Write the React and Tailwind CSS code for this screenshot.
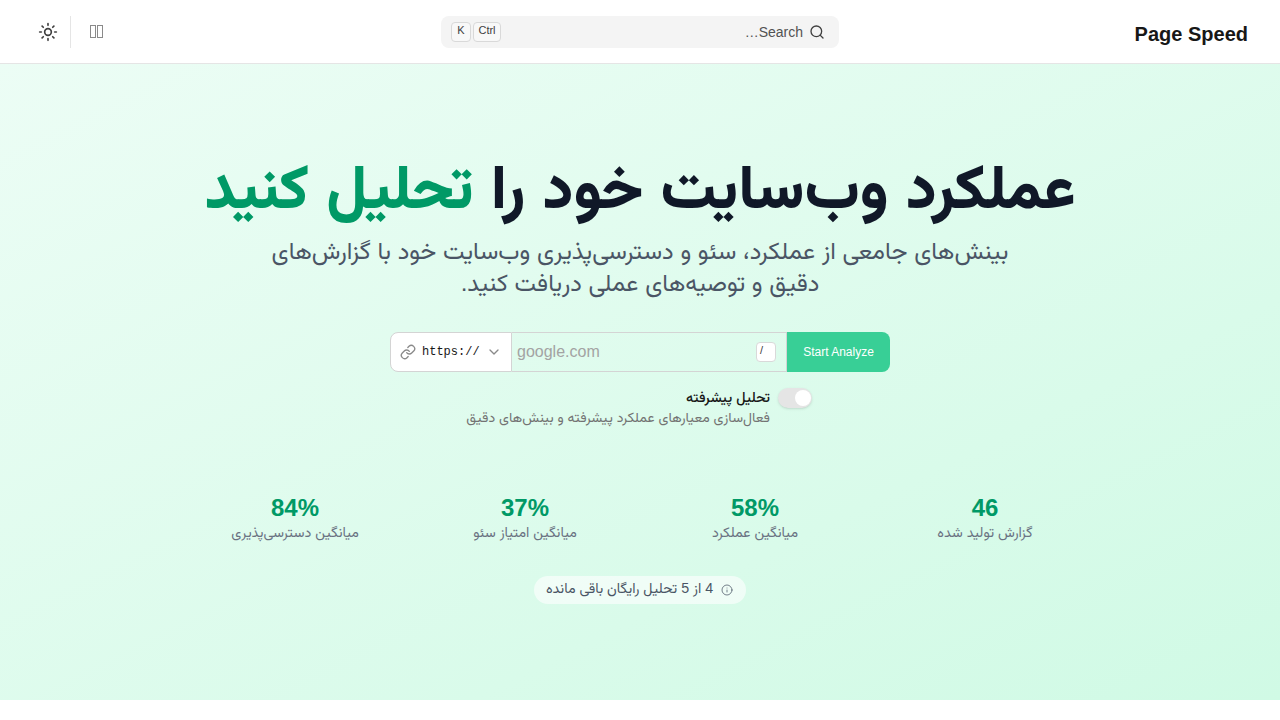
import { Search, Sun, Link, ChevronDown, Info } from "lucide-react";

const stats = [
  { value: "46", label: "گزارش تولید شده" },
  { value: "58%", label: "میانگین عملکرد" },
  { value: "37%", label: "میانگین امتیاز سئو" },
  { value: "84%", label: "میانگین دسترسی‌پذیری" },
];

const Header = () => (
  <header className="h-16 bg-white border-b border-[#e5e5e5] flex items-center justify-between px-8">
    <div className="w-[320px] pt-1 text-[20px] leading-7 font-bold text-[#171717]">Page Speed</div>
    <div className="w-[398px] h-8 bg-[#f4f4f4] rounded-lg flex items-center justify-between pr-[14px] pl-[10px]">
      <div className="flex items-center gap-[6px] text-sm text-[#525252]">
        <Search size={16} strokeWidth={2} className="text-[#404040]" />
        <span>Search…</span>
      </div>
      <div dir="ltr" className="flex items-center gap-[2px]">
        <kbd className="w-5 h-5 flex items-center justify-center pb-[2px] border border-[#d9d9d9] rounded text-[11px] text-[#404040] bg-[#f8f8f8] font-['Liberation_Sans']">K</kbd>
        <kbd className="w-7 h-5 flex items-center justify-center pb-[2px] border border-[#d9d9d9] rounded text-[11px] text-[#404040] bg-[#f8f8f8] font-['Liberation_Sans']">Ctrl</kbd>
      </div>
    </div>
    <div className="w-[320px] flex items-center justify-end gap-3">
      <div className="flex gap-px ml-[7px]">
        <span className="w-[6px] h-[13px] border border-[#8a8a8a]"></span>
        <span className="w-[6px] h-[13px] border border-[#8a8a8a]"></span>
      </div>
      <div className="w-px h-8 bg-[#e5e5e5]"></div>
      <Sun size={20} strokeWidth={2} className="text-[#404040] ml-[6px]" />
    </div>
  </header>
);

const AnalyzeForm = () => (
  <div dir="ltr" className="w-[500px] h-10 flex mt-[33px]">
    <div className="w-[122px] flex items-center bg-white border border-[#d4d4d4] rounded-l-lg pl-[9px] pr-[9px]">
      <Link size={16} strokeWidth={2} className="text-[#8a8a8a]" />
      <span className="ml-[6px] text-xs font-['Liberation_Mono'] text-[#171717]">https://</span>
      <ChevronDown size={16} strokeWidth={2} className="ml-auto text-[#8a8a8a]" />
    </div>
    <div className="flex-1 flex items-center border-y border-r border-[#d4d4d4] pl-[5px] pr-[10px]">
      <span className="text-base text-[#a3a3a3] font-['Liberation_Sans']">google.com</span>
      <kbd className="ml-auto w-5 h-5 bg-white border border-[#d9d9d9] rounded text-[11px] leading-[14px] pl-[3px] text-[#404040] font-['Liberation_Sans']">/</kbd>
    </div>
    <button type="button" className="w-[103px] bg-[#38cf96] text-white text-xs rounded-r-lg font-['Liberation_Sans']">
      Start Analyze
    </button>
  </div>
);

const App = () => {
  return (
    <div dir="rtl" className="h-[720px] bg-white font-['Liberation_Sans','Vazirmatn',sans-serif] overflow-hidden">
      <Header />
      <main className="h-[636px] bg-gradient-to-br from-[#ecfdf5] to-[#d0fae5] flex flex-col items-center pt-[87px]">
        <h1 className="text-[61.5px] leading-[72px] font-extrabold text-[#101828]">
          عملکرد وب‌سایت خود را <span className="text-[#009966]">تحلیل کنید</span>
        </h1>
        <p className="w-[768px] mt-[12px] text-center text-[24.2px] leading-8 text-[#4a5565]">
          بینش‌های جامعی از عملکرد، سئو و دسترسی‌پذیری وب‌سایت خود با گزارش‌های دقیق و توصیه‌های عملی دریافت کنید.
        </p>
        <AnalyzeForm />
        <div className="w-[346px] mt-4 flex items-start gap-2">
          <div className="w-[34px] h-5 mr-px rounded-full bg-[#e5e5e5] shadow-sm flex items-center justify-start px-[1px] shrink-0">
            <div className="w-4 h-4 rounded-full bg-white"></div>
          </div>
          <div className="flex flex-col">
            <span className="text-[14.2px] leading-[18px] font-medium text-[#171717]">تحلیل پیشرفته</span>
            <span className="text-sm leading-[22px] text-[#737373] whitespace-nowrap">فعال‌سازی معیارهای عملکرد پیشرفته و بینش‌های دقیق</span>
          </div>
        </div>
        <div className="w-[896px] mt-[64px] grid grid-cols-4 gap-6">
          {stats.map((stat, index) => (
            <div key={index} className="flex flex-col items-center">
              <span className="text-2xl leading-8 font-bold text-[#009966]">{stat.value}</span>
              <span className="text-[14.2px] leading-4 text-[#6a7282]">{stat.label}</span>
            </div>
          ))}
        </div>
        <div className="mt-9 h-7 pr-[13px] pl-3 flex items-center gap-2 rounded-full bg-white/60 text-[14.25px] text-[#4a5565]">
          <Info size={12} strokeWidth={1.5} />
          <span className="pb-[2px]">4 از 5 تحلیل رایگان باقی مانده</span>
        </div>
      </main>
    </div>
  );
};

export default App;
